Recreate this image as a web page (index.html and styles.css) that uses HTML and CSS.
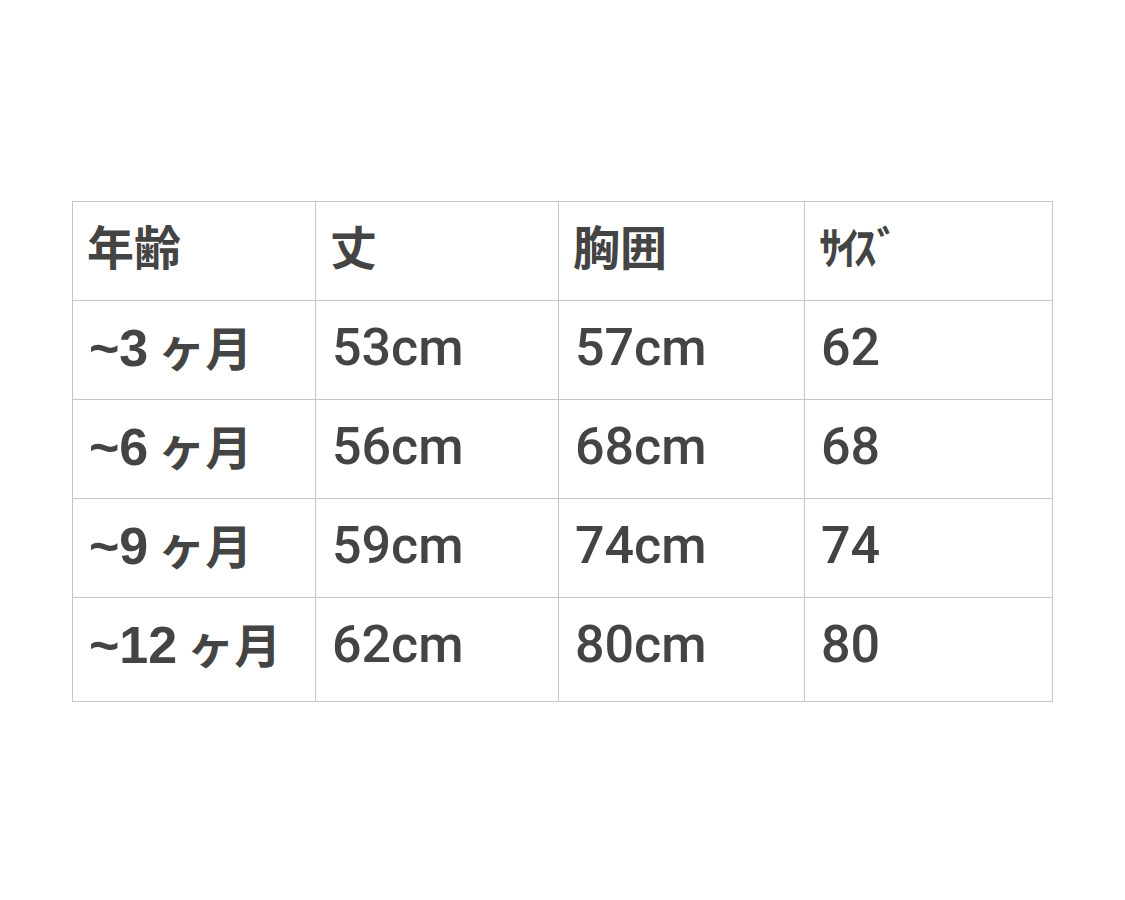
FILE: index.html
```html
<!DOCTYPE html>
<html lang="ja">
<head>
<meta charset="utf-8">
<link rel="stylesheet" href="styles.css">
</head>
<body>
<table class="size-table">
  <colgroup>
    <col class="c1"><col class="c2"><col class="c3"><col class="c4">
  </colgroup>
  <tr class="head">
    <th><span class="jp">年齢</span></th>
    <th><span class="jp">丈</span></th>
    <th><span class="jp">胸囲</span></th>
    <th><span class="jp kana">ｻｲｽﾞ</span></th>
  </tr>
  <tr>
    <th>~3<span class="jp unit">ヶ月</span></th><td>53cm</td><td>57cm</td><td>62</td>
  </tr>
  <tr>
    <th>~6<span class="jp unit">ヶ月</span></th><td>56cm</td><td>68cm</td><td>68</td>
  </tr>
  <tr>
    <th>~9<span class="jp unit">ヶ月</span></th><td>59cm</td><td>74cm</td><td>74</td>
  </tr>
  <tr class="last">
    <th>~12<span class="jp unit">ヶ月</span></th><td>62cm</td><td>80cm</td><td>80</td>
  </tr>
</table>
</body>
</html>
```

FILE: styles.css
```css
html, body {
  margin: 0;
  padding: 0;
  background: #ffffff;
}

body {
  font-family: "Liberation Sans", "Noto Sans CJK JP", sans-serif;
  color: #444444;
}

.size-table {
  margin: 201px 0 0 72px;
  border-collapse: collapse;
  table-layout: fixed;
  width: 980px;
}

.c1 { width: 243px; }
.c2 { width: 243px; }
.c3 { width: 246px; }
.c4 { width: 248px; }

.size-table th,
.size-table td {
  border: 1px solid #c6c6c6;
  height: 99px;
  padding: 0 0 4px 16px;
  text-align: left;
  vertical-align: middle;
  font-size: 52px;
  line-height: 1;
  box-sizing: border-box;
  white-space: nowrap;
}

.size-table th {
  font-weight: 700;
}

.size-table td {
  font-family: "Roboto", "Noto Sans CJK JP", sans-serif;
  font-weight: 500;
}

.size-table .head th {
  padding-bottom: 8px;
}

.size-table .last th,
.size-table .last td {
  height: 104px;
  padding-bottom: 9px;
}

.jp {
  font-family: "Noto Sans CJK JP", sans-serif;
  font-size: 47px;
  font-weight: 700;
}

.head .jp {
  margin-left: -2px;
}

.unit {
  margin-left: 10px;
}

.kana {
  font-size: 45px;
  letter-spacing: -5px;
}
```
